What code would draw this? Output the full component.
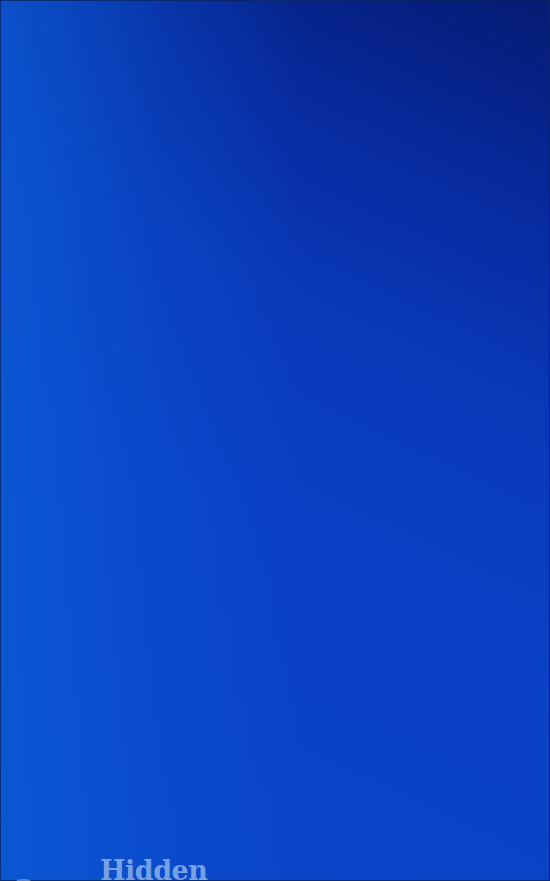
import React from "react";

export default function App() {
  return (
    <div className="w-[550px] h-[881px] overflow-hidden relative bg-[#0a3ec0]">
      <div className="absolute inset-0 bg-[linear-gradient(205deg,#051a72_0%,#07299c_18%,#0938b8_36%,#0a40c4_58%,#0a46c9_100%)]" />
      <div className="absolute inset-0 bg-[linear-gradient(90deg,rgba(12,92,215,0.75)_0%,rgba(12,92,215,0.25)_30%,rgba(12,92,215,0)_55%)]" />
      <div className="absolute inset-0 border border-[#0a2660]/80" />
      <div className="absolute left-0 right-0 top-[855px] h-[40px]">
        <span className="absolute left-[14px] top-[13px] text-[34px] leading-none font-bold text-[#6f9ad8]/80 [font-family:'DejaVu_Serif',serif]">a</span>
        <span className="absolute left-[100px] top-[2px] text-[27px] leading-none font-bold tracking-[-0.5px] text-[#86aee6]/90 [font-family:'DejaVu_Serif',serif]">Hidden</span>
        <span className="absolute left-[216px] top-[15px] text-[34px] leading-none font-bold text-[#6f9ad8]/80 [font-family:'DejaVu_Serif',serif]">a</span>
      </div>
    </div>
  );
}
